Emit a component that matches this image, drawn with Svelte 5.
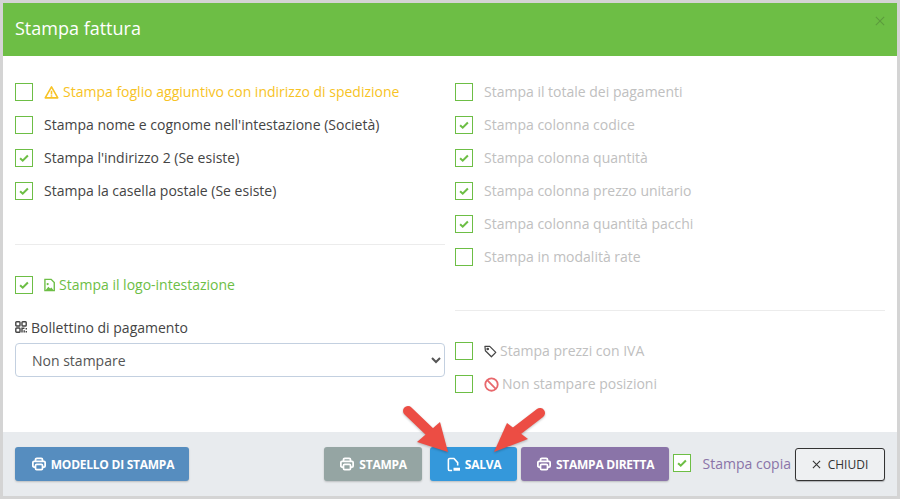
<script lang="ts">
	const leftRows = [
		{ label: 'Stampa foglio aggiuntivo con indirizzo di spedizione', checked: false, tone: 'warn', icon: 'warn' },
		{ label: "Stampa nome e cognome nell'intestazione (Società)", checked: false, tone: '', icon: '' },
		{ label: "Stampa l'indirizzo 2 (Se esiste)", checked: true, tone: '', icon: '' },
		{ label: 'Stampa la casella postale (Se esiste)', checked: true, tone: '', icon: '' }
	];
	const rightRows = [
		{ label: 'Stampa il totale dei pagamenti', checked: false },
		{ label: 'Stampa colonna codice', checked: true },
		{ label: 'Stampa colonna quantità', checked: true },
		{ label: 'Stampa colonna prezzo unitario', checked: true },
		{ label: 'Stampa colonna quantità pacchi', checked: true },
		{ label: 'Stampa in modalità rate', checked: false }
	];
</script>

{#snippet box(checked)}
	<span class="box">
		{#if checked}
			<svg viewBox="0 0 16 16" width="12" height="12"><path d="M2.800 8.200l3.500 3.300L13.200 4.600" fill="none" stroke="#6dbe45" stroke-width="2.700" /></svg>
		{/if}
	</span>
{/snippet}

{#snippet printer()}
	<svg class="btn-icon" viewBox="0 0 16 16" width="14" height="14" fill="none" stroke="currentColor" stroke-width="2">
		<path d="M4 5V3a1.500 1.500 0 0 1 1.500-1.500h5A1.500 1.500 0 0 1 12 3v2" />
		<path d="M4 11.500H2.300A1.300 1.300 0 0 1 1 10.200V6.300A1.300 1.300 0 0 1 2.300 5h11.400A1.300 1.300 0 0 1 15 6.300v3.900a1.300 1.300 0 0 1-1.300 1.300H12" />
		<rect x="4" y="8.500" width="8" height="6" rx="1.300" />
	</svg>
{/snippet}

<div class="modal">
	<header class="head">
		<h1>Stampa fattura</h1>
		<svg class="close" viewBox="0 0 12 12" width="10" height="10"><path d="M1 1l10 10M11 1L1 11" stroke="#5c9c3d" stroke-width="1.300" /></svg>
	</header>

	<main class="body">
		<section class="col">
			{#each leftRows as row}
				<div class="row" class:warn={row.tone === 'warn'}>
					{@render box(row.checked)}
					<span class="label">{#if row.icon === 'warn'}<svg class="ico wide" viewBox="0 0 16 16" width="15" height="15" fill="none" stroke="#f7c325" stroke-width="1.700"><path d="M8 2L1.300 13.700h13.400z" stroke-linejoin="round" /><path d="M8 6.200v3.800M8 11v1.400" /></svg>{/if}{row.label}</span>
				</div>
			{/each}
			<hr class="rule" />
			<div class="row logo">
				{@render box(true)}
				<span class="label"><svg class="ico wide" viewBox="0 0 12 14" width="11" height="14"><path d="M1 .800h6.800l3.400 3.400v9H1z" fill="none" stroke="#6dbe45" stroke-width="1.500" /><path d="M2 12.500l2.700-3.700 2 2 1.300-1 2.200 2.700z" fill="#6dbe45" /><circle cx="4" cy="6" r="1.200" fill="#6dbe45" /></svg>Stampa il logo-intestazione</span>
			</div>
			<div class="field">
				<span class="field-label">
					<svg viewBox="0 0 12 12" width="12" height="12" fill="none" stroke="#444" stroke-width="1.400">
						<rect x=".8" y=".8" width="4.200" height="4.200" rx=".8" /><rect x="7" y=".8" width="4.200" height="4.200" rx=".8" /><rect x=".8" y="7" width="4.200" height="4.200" rx=".8" /><path d="M7 11.500V7.200h2.500M9.200 9.200v2.300M11.300 7v1.500M11.300 10v1.500" />
					</svg>
					Bollettino di pagamento
				</span>
				<select>
					<option>Non stampare</option>
				</select>
			</div>
		</section>

		<section class="col muted">
			{#each rightRows as row}
				<div class="row">
					{@render box(row.checked)}
					<span class="label">{row.label}</span>
				</div>
			{/each}
			<hr class="rule" />
			<div class="row">
				{@render box(false)}
				<span class="label"><svg class="ico" viewBox="0 0 14 14" width="13" height="13" fill="none" stroke="#444" stroke-width="1.300"><path d="M1 1.500h5.200l6.500 6.500-4.700 4.700L1.500 6.200z" stroke-linejoin="round" /><circle cx="4" cy="4.300" r=".8" /></svg>Stampa prezzi con IVA</span>
			</div>
			<div class="row">
				{@render box(false)}
				<span class="label"><svg class="ico" viewBox="0 0 14 14" width="15" height="15" fill="none" stroke="#e8686c" stroke-width="1.700"><circle cx="7" cy="7" r="5.800" /><path d="M3 3l8 8" /></svg>Non stampare posizioni</span>
			</div>
		</section>
	</main>

	<footer class="foot">
		<button class="btn model">{@render printer()}MODELLO DI STAMPA</button>
		<div class="foot-right">
			<button class="btn grey">{@render printer()}STAMPA</button>
			<button class="btn blue">
				<svg class="btn-icon" viewBox="0 0 14 16" width="13" height="15" fill="none" stroke="currentColor" stroke-width="1.700"><path d="M5.500 14.500H3A1.500 1.500 0 0 1 1.500 13V3A1.500 1.500 0 0 1 3 1.500h4.500L11.500 6v3" /><path d="M7 11.500h7v3.200H7z" fill="currentColor" stroke="none" /></svg>SALVA
			</button>
			<button class="btn purple">{@render printer()}STAMPA DIRETTA</button>
			<div class="copy">
				{@render box(true)}
				<span class="copy-label">Stampa copia</span>
			</div>
			<button class="btn-close">
				<svg viewBox="0 0 10 10" width="9" height="9"><path d="M1 1l8 8M9 1l-8 8" stroke="#333" stroke-width="1.200" /></svg>
				CHIUDI
			</button>
		</div>
	</footer>
</div>

<!-- red annotation arrows drawn on top of the screenshot -->
<svg class="arrows" viewBox="0 0 900 499" width="900" height="499">
	<g fill="#ec4d44">
		<path d="M408 411L432 434" stroke="#ec4d44" stroke-width="10" stroke-linecap="round" />
		<path d="M417 442L440 422L448 452z" />
		<path d="M540 413L514 433" stroke="#ec4d44" stroke-width="10" stroke-linecap="round" />
		<path d="M494 452L507 423L528 439z" />
	</g>
</svg>

<style>
	:global(body) {
		margin: 0;
		background: #d4d4d4;
	}

	.modal {
		box-sizing: border-box;
		width: 894px;
		height: 493px;
		margin: 3px 0 0 3px;
		background: #fff;
		display: flex;
		flex-direction: column;
		font-family: 'Open Sans', sans-serif;
		font-size: 14px;
		color: #444;
	}

	.head {
		height: 53px;
		flex: none;
		background: #6dbe45;
		display: flex;
		align-items: center;
		justify-content: space-between;
		padding: 0 12px;
		box-sizing: border-box;
	}

	.head h1 {
		margin: 0 0 3px;
		font-size: 18px;
		font-weight: 400;
		color: #fff;
	}

	.close {
		margin-bottom: 17px;
	}

	.body {
		flex: 1;
		display: grid;
		grid-template-columns: 430px 430px;
		gap: 10px;
		padding: 27px 12px 0;
	}

	.col {
		display: flex;
		flex-direction: column;
		gap: 15px;
	}

	.row {
		display: flex;
		align-items: center;
		height: 18px;
		line-height: 18px;
		white-space: nowrap;
	}

	.box {
		box-sizing: border-box;
		width: 18px;
		height: 18px;
		flex: none;
		border: 1px solid #6dbe45;
		display: inline-flex;
		align-items: center;
		justify-content: center;
		background: #fff;
	}

	.label {
		margin-left: 11px;
		display: inline-flex;
		align-items: center;
	}

	.ico {
		margin-right: 3px;
	}

	.ico.wide {
		margin-right: 4px;
	}

	.warn {
		color: #f7c325;
	}

	.logo {
		color: #6dbe45;
	}

	.muted {
		color: #c0c0c0;
	}

	hr {
		width: 100%;
		border: 0;
		border-top: 1px solid #ececec;
		margin: 0;
	}

	.rule {
		margin: 29px 0 16px;
	}

	.field {
		margin-top: 9px;
	}

	.field-label {
		display: flex;
		align-items: center;
		gap: 4px;
		height: 18px;
		margin-bottom: 7px;
	}

	select {
		width: 100%;
		height: 34px;
		padding: 0 12px;
		box-sizing: border-box;
		border: 1px solid #c3d0e0;
		border-radius: 4px;
		background: #fff;
		font: inherit;
		color: #555;
	}

	.foot {
		height: 64px;
		flex: none;
		box-sizing: border-box;
		background: #e8ebee;
		display: flex;
		justify-content: space-between;
		align-items: center;
		padding: 0 12px;
	}

	.foot-right {
		display: flex;
		align-items: center;
	}

	.btn {
		height: 34px;
		box-sizing: border-box;
		border: 0;
		border-radius: 3px;
		color: #fff;
		font-family: inherit;
		font-size: 12px;
		font-weight: 700;
		letter-spacing: -0.25px;
		display: inline-flex;
		align-items: center;
		justify-content: center;
		gap: 5px;
		padding: 0 0 0 2px;
		box-shadow: 0 1px 2px rgba(0, 0, 0, 0.2);
	}

	.model {
		width: 174px;
		background: #568dbf;
	}

	.grey {
		width: 98px;
		background: #95a5a3;
		margin-right: 8px;
	}

	.blue {
		width: 87px;
		background: #3498db;
		margin-right: 4px;
	}

	.purple {
		width: 148px;
		background: #8a74a8;
	}

	.copy {
		display: flex;
		align-items: center;
		margin-left: 4px;
		color: #8a74a8;
		position: relative;
		top: -1px;
	}

	.copy-label {
		margin-left: 12px;
		margin-right: 4px;
	}

	.btn-close {
		width: 90px;
		height: 33px;
		box-sizing: border-box;
		background: #eef0f2;
		border: 1px solid #333;
		border-radius: 3px;
		color: #333;
		font-family: inherit;
		font-size: 12px;
		display: inline-flex;
		align-items: center;
		justify-content: center;
		gap: 7px;
		padding: 0;
		box-shadow: 0 1px 1px rgba(0, 0, 0, 0.25);
	}

	.arrows {
		position: absolute;
		left: 0;
		top: 0;
		pointer-events: none;
		filter: drop-shadow(0 1px 1px rgba(0, 0, 0, 0.25));
	}
</style>
